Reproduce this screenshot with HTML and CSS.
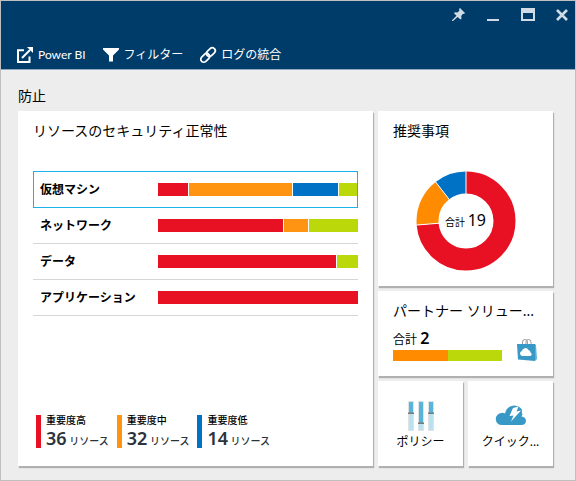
FILE: index.html
```html
<!DOCTYPE html>
<html lang="ja">
<head>
<meta charset="utf-8">
<title>防止</title>
<link rel="stylesheet" href="styles.css">
</head>
<body>
<header class="header">
  <div class="window-controls">
    <button type="button" aria-label="ピン留め"><svg viewBox="0 0 14 14"><path d="M7 0 12 5 11 6 10 5.800 8.200 8 8.500 10.600 7.500 11.500 4.600 8.900 0 13H-1V12.200L3.500 7.800 1 5.200 1.900 4.300 4.500 4.600 6.500 2.400 6 1Z" fill="currentColor"/></svg></button>
    <button type="button" aria-label="最小化"><svg viewBox="0 0 14 14"><path d="M0 11H12V13H0Z" fill="currentColor"/></svg></button>
    <button type="button" aria-label="最大化"><svg viewBox="0 0 14 14"><path d="M0 0H14V13H0ZM2 5V11H12V5Z" fill="currentColor" fill-rule="evenodd"/></svg></button>
    <button type="button" aria-label="閉じる"><svg viewBox="0 0 14 14"><path d="M2 2 12 12M12 2 2 12" fill="none" stroke="currentColor" stroke-width="2.600"/></svg></button>
  </div>
  <nav class="toolbar">
    <button type="button"><svg viewBox="0 0 16 16"><path d="M7 3.200H1V15H12.500V9.500" fill="none" stroke="currentColor" stroke-width="2"/><path d="M5 11 13 3" stroke="currentColor" stroke-width="2"/><path d="M10 0H16V6Z" fill="currentColor"/></svg>Power BI</button>
    <button type="button"><svg viewBox="0 0 16 16"><path d="M0 1H16V2.500L10 8.500V14.500H6V8.500L0 2.500Z" fill="currentColor"/></svg>フィルター</button>
    <button type="button"><svg viewBox="0 0 16 16"><g fill="none" stroke="currentColor" stroke-width="1.700" transform="rotate(-45 8 8)"><rect x="-1" y="5" width="10" height="6" rx="3"/><rect x="7" y="5" width="10" height="6" rx="3"/></g></svg>ログの統合</button>
  </nav>
</header>
<main class="content">
  <h1>防止</h1>
  <div class="tiles">
    <section class="tile health">
      <h2>リソースのセキュリティ正常性</h2>
      <ul class="rows">
        <li><a class="row selected" href="#vm"><span>仮想マシン</span><span class="bar"><i class="high" style="flex-grow:30"></i><i class="medium" style="flex-grow:103"></i><i class="low" style="flex-grow:45"></i><i class="good" style="flex-grow:19"></i></span></a></li>
        <li><a class="row" href="#network"><span>ネットワーク</span><span class="bar"><i class="high" style="flex-grow:125"></i><i class="medium" style="flex-grow:24"></i><i class="good" style="flex-grow:49"></i></span></a></li>
        <li><a class="row" href="#data"><span>データ</span><span class="bar"><i class="high" style="flex-grow:178"></i><i class="good" style="flex-grow:21"></i></span></a></li>
        <li><a class="row" href="#apps"><span>アプリケーション</span><span class="bar"><i class="high" style="flex-grow:1"></i></span></a></li>
      </ul>
      <ul class="legend">
        <li><i class="high"></i><div><h3>重要度高</h3><p><b>36</b> リソース</p></div></li>
        <li><i class="medium"></i><div><h3>重要度中</h3><p><b>32</b> リソース</p></div></li>
        <li><i class="low"></i><div><h3>重要度低</h3><p><b>14</b> リソース</p></div></li>
      </ul>
    </section>
    <section class="tile recommend">
      <h2>推奨事項</h2>
      <div class="donut">
        <svg viewBox="0 0 100 100" aria-hidden="true">
          <g fill="none" stroke-width="22" transform="rotate(-90 50 50)">
            <circle cx="50" cy="50" r="38.500" stroke="#e81123" pathLength="19" stroke-dasharray="14 5"/>
            <circle cx="50" cy="50" r="38.500" stroke="#ff8c00" pathLength="19" stroke-dasharray="3 16" stroke-dashoffset="-14"/>
            <circle cx="50" cy="50" r="38.500" stroke="#0072c6" pathLength="19" stroke-dasharray="2 17" stroke-dashoffset="-17"/>
          </g>
          <path d="M50 50V0M50 50 .2 54.100M50 50 19.300 10.500" stroke="#fff"/>
        </svg>
        <p>合計 <b>19</b></p>
      </div>
    </section>
    <section class="tile partner">
      <h2>パートナー ソリュー...</h2>
      <div class="partner-body">
        <div class="partner-total">
          <p>合計 <b>2</b></p>
          <div class="split"><i class="orange"></i><i class="good"></i></div>
        </div>
        <svg viewBox="0 0 20 22" aria-hidden="true"><path d="M5.500 6V3A2.500 2.500 0 0 1 10.500 3V6M9 6V3A2.500 2.500 0 0 1 14 3V6" fill="none" stroke="#a0a1a2"/><path d="M0 5H18V22L1 20.500Z" fill="#3999c6"/><path d="M18 5 19 6 20 20 18 22Z" fill="#59b4d9"/><path d="M5 17A2.600 2.600 0 0 1 4.800 12 3.600 3.600 0 0 1 11.500 11 2.600 2.600 0 0 1 13.500 13.600 1.800 1.800 0 0 1 13.500 17Z" fill="#fff"/></svg>
      </div>
    </section>
    <a class="tile small" href="#policy">
      <svg viewBox="0 0 32 32" aria-hidden="true"><path d="M3 1H9V31H3ZM13 1H19V31H13ZM23 1H29V31H23Z" fill="#dfe3e5"/><path d="M4 2H8V30H4ZM14 2H18V30H14ZM24 2H28V30H24Z" fill="#b8e2f0"/><path d="M4 2H8V13H4ZM14 2H18V23H14ZM24 2H28V13H24Z" fill="#59b4d9"/><path d="M3 12.500H9V14H3ZM13 22.500H19V24H13ZM23 12.500H29V14H23Z" fill="#7a7a7a"/></svg>
      ポリシー</a>
    <a class="tile small" href="#quick">
      <svg viewBox="0 0 32 32" aria-hidden="true"><path d="M7 25A6 6 0 0 1 6.500 13Q8.500 12.500 10 13.500 11.500 6 19 5.500 24.500 6 27 9.500 26.500 12 27.500 14.500L26.500 16.500Q31 17 31 21 30.500 25 26.500 25Z" fill="#3999c6"/><path d="M18 8 23.500 6.500 21.500 11.500 26 10.500 16 21.500 18.500 15.500 14.500 16Z" fill="#fff"/></svg>
      クイック...</a>
  </div>
</main>
</body>
</html>
```
FILE: styles.css
```css
* {
  box-sizing: border-box;
}

body {
  margin: 0;
  min-height: 100vh;
  border: 1px solid #bfbfbf;
  background: #ededed;
  color: #000;
  font: 12px/16px "Noto Sans", "Noto Sans CJK JP", sans-serif;
}

h1, h2, h3, p, ul {
  margin: 0;
  padding: 0;
  list-style: none;
}

h1, h2 {
  font-size: 14px;
  font-weight: 400;
  line-height: 20px;
  white-space: nowrap;
}

a {
  color: inherit;
  text-decoration: none;
}

button {
  padding: 0;
  border: 0;
  background: none;
  color: inherit;
  font: inherit;
  cursor: pointer;
}

svg {
  display: block;
  flex: none;
  overflow: visible;
}

.header {
  display: flex;
  flex-direction: column;
  gap: 25px;
  padding: 7px 6px 6px 16px;
  border-bottom: 1px solid #8fa9c0;
  background: #003c6a;
  color: #fff;
}

.window-controls {
  display: flex;
  justify-content: flex-end;
  gap: 20px;
  color: #cfdbe5;
}

.window-controls svg {
  width: 14px;
  height: 14px;
}

.toolbar {
  display: flex;
  gap: 17px;
  font-family: Lato, "Noto Sans CJK JP", sans-serif;
}

.toolbar button {
  display: flex;
  align-items: center;
  gap: 5px;
}

.toolbar svg {
  width: 16px;
  height: 16px;
}

.content {
  padding: 16px 22px 13px 17px;
}

.tiles {
  display: grid;
  grid-template-columns: repeat(6, minmax(0, 1fr));
  grid-auto-rows: minmax(85px, auto);
  gap: 5px;
  margin-top: 5px;
}

.tile {
  padding: 10px 15px;
  background: #fff;
  box-shadow: 1px 2px 1px #b0b0b0;
}

.high { background: #e81123; }
.medium { background: #ff9412; }
.low { background: #0072c6; }
.good { background: #bad80a; }
.orange { background: #ff8c00; }

.health {
  display: flex;
  flex-direction: column;
  grid-column: span 4;
  grid-row: span 4;
  padding-bottom: 18px;
}

.rows {
  margin-top: 30px;
}

.row {
  display: grid;
  grid-template-columns: 5fr 8fr;
  align-items: center;
  height: 36px;
  border-bottom: 1px solid #d6d6d6;
  font-weight: 700;
}

.row > :first-child {
  padding-left: 7px;
}

.selected {
  height: 37px;
  border-bottom: 0;
  outline: 1px solid #1ab2e8;
  outline-offset: -1px;
}

.bar {
  display: flex;
  gap: 1px;
  height: 13px;
}

.bar i {
  flex-basis: 0;
}

.legend {
  display: flex;
  gap: 8px;
  margin-top: auto;
  padding-left: 3px;
}

.legend li {
  display: flex;
  gap: 5px;
}

.legend i {
  width: 5px;
}

.legend h3 {
  font-size: 10px;
  font-weight: 500;
  line-height: 10px;
}

.legend p {
  margin-top: 6px;
  color: #2b333b;
  font-size: 10px;
  font-weight: 500;
  line-height: 14px;
  white-space: nowrap;
}

.legend b {
  font-size: 18px;
  font-weight: 600;
}

.recommend {
  grid-column: span 2;
  grid-row: span 2;
}

.donut {
  display: grid;
  place-items: center;
  margin-top: 30px;
}

.donut > * {
  grid-area: 1 / 1;
}

.donut svg {
  width: 100px;
  height: 100px;
}

.donut p {
  font-size: 10px;
  line-height: 20px;
}

.donut b {
  font-size: 16px;
  font-weight: 400;
}

.partner {
  grid-column: span 2;
  padding-right: 16px;
}

.partner-body {
  display: flex;
  align-items: flex-end;
  gap: 15px;
  margin-top: 7px;
}

.partner-total {
  flex: 1;
}

.partner-total p {
  line-height: 20px;
}

.partner-total b {
  font-size: 16px;
  font-weight: 600;
}

.split {
  display: grid;
  grid-template-columns: 1fr 1fr;
  height: 11px;
}

.partner-body svg {
  width: 20px;
  height: 22px;
}

.small {
  display: flex;
  flex-direction: column;
  align-items: center;
  gap: 2px;
  padding: 19px 5px 10px;
  white-space: nowrap;
}

.small svg {
  width: 32px;
  height: 32px;
}
```
